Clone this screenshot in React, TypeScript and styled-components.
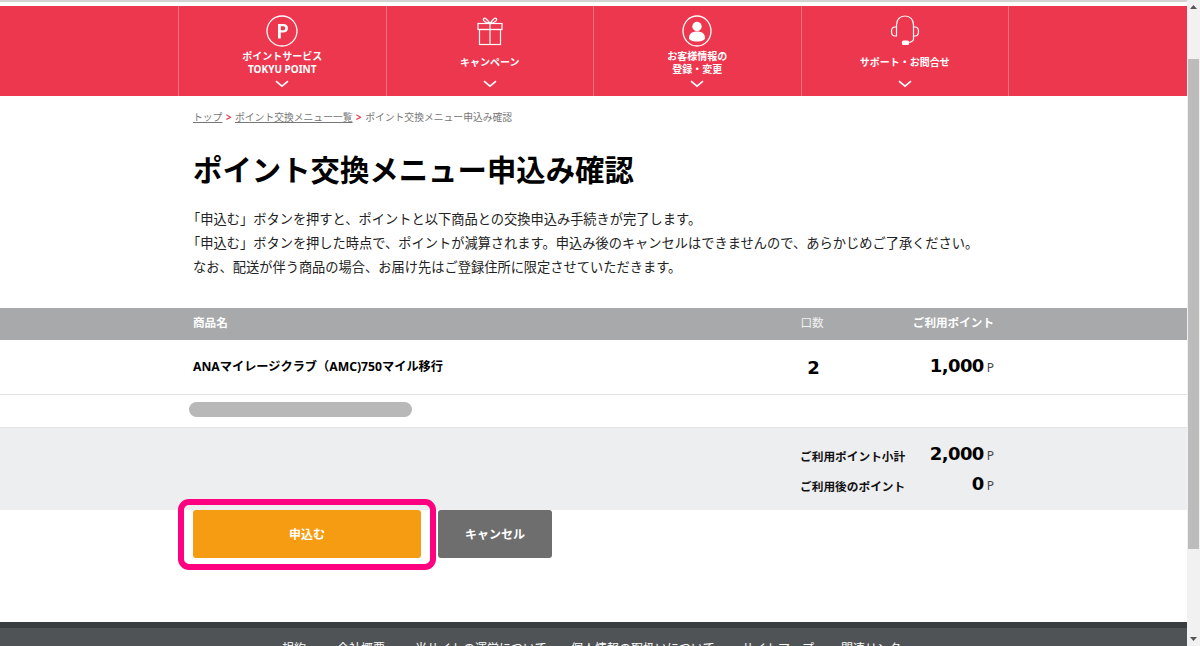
import React from "react";
import styled, { createGlobalStyle } from "styled-components";

const Global = createGlobalStyle`
  html, body { margin: 0; padding: 0; height: 100%; overflow: hidden; background: #fff; }
  body { font-family: "Noto Sans", "Noto Sans CJK JP", sans-serif; color: #000; }
  * { box-sizing: border-box; }
`;

const Page = styled.div`
  display: flex;
  width: 1200px;
  height: 646px;
  overflow: hidden;
`;
const Main = styled.div`
  flex: 1;
  min-width: 0;
  display: flex;
  flex-direction: column;
`;
const TopGap = styled.div`
  height: 6px;
  border-top: 2px solid #d2d2d2;
  flex: none;
`;
const NavBar = styled.nav`
  height: 90px;
  flex: none;
  background: #ec374e;
  display: flex;
  padding-left: 178px;
`;
const NavList = styled.div`
  width: 831px;
  display: grid;
  grid-template-columns: repeat(4, 1fr);
  border-right: 1px solid #f2707f;
`;
const NavItem = styled.div`
  position: relative;
  border-left: 1px solid #f2707f;
  display: flex;
  flex-direction: column;
  align-items: center;
  color: #fff;
  font-size: 10px;
  font-weight: 700;
  line-height: 13px;
  text-align: center;
  padding-top: 8px;
`;
const IconWrap = styled.div`
  height: 34px;
  display: flex;
  align-items: center;
  justify-content: center;
  flex: none;
`;
const NavLabel = styled.div`
  height: 27px;
  margin-top: 1px;
  display: flex;
  flex-direction: column;
  justify-content: center;
  white-space: nowrap;
`;
const Chevron = styled.svg`
  position: absolute;
  left: 50%;
  margin-left: -7px;
  top: 74px;
`;
const Content = styled.div`
  width: 830px;
  margin: 0 auto;
  padding: 0 14.5px;
`;
const Crumbs = styled.div`
  padding-top: 15px;
  height: 40px;
  font-size: 9.8px;
  line-height: 14px;
  color: #777;
  white-space: nowrap;
`;
const CrumbLink = styled.span`
  text-decoration: underline;
`;
const CrumbSep = styled.span`
  color: #ec374e;
  font-weight: 700;
  margin: 0 3.5px;
`;
const Title = styled.h1`
  margin: 14px 0 0;
  font-size: 29.4px;
  line-height: 40px;
  height: 40px;
  font-weight: 700;
  white-space: nowrap;
`;
const Lead = styled.p`
  margin: 17px 0 0 -6px;
  font-size: 13.24px;
  line-height: 24px;
  color: #222;
  white-space: nowrap;
  height: 101px;
`;
const LeadLast = styled.span`
  margin-left: 6px;
`;
const Band = styled.div<{ $bg: string; $h: number; $line?: boolean }>`
  height: ${(p) => p.$h}px;
  background: ${(p) => p.$bg};
  flex: none;
  border-bottom: ${(p) => (p.$line ? "1px solid #e2e3e4" : "none")};
`;
const Row = styled.div`
  width: 830px;
  height: 100%;
  margin: 0 auto;
  padding: 0 14.5px;
  display: grid;
  grid-template-columns: 1fr 80px 142px;
  align-items: center;
`;
const HeadRow = styled(Row)`
  padding-bottom: 4px;
`;
const HeadCell = styled.div<{ $align?: string }>`
  color: #fff;
  font-size: 11.6px;
  font-weight: 700;
  text-align: ${(p) => p.$align || "left"};
  white-space: nowrap;
`;
const QtyHead = styled(HeadCell)`
  font-weight: 400;
  color: #f2f2f2;
`;
const Name = styled.div`
  font-size: 12.2px;
  font-weight: 700;
  white-space: nowrap;
  margin-top: -3px;
`;
const Qty = styled.div`
  font-weight: 700;
  text-align: center;
  font-family: "DejaVu Sans", sans-serif;
  font-size: 18px;
  padding-left: 3px;
`;
const Amount = styled.div`
  text-align: right;
  white-space: nowrap;
  line-height: 28px;
`;
const Num = styled.span`
  font-weight: 700;
  font-family: "DejaVu Sans", sans-serif;
  font-size: 18px;
  letter-spacing: -0.6px;
`;
const Unit = styled.span`
  font-size: 12px;
  color: #444;
  margin-left: 3px;
`;
const Redaction = styled.div`
  width: 830px;
  margin: 0 auto;
  padding: 7px 0 0 10px;
`;
const Pill = styled.div`
  width: 223px;
  height: 15px;
  border-radius: 8px;
  background: #b8b8b8;
`;
const SummaryInner = styled.div`
  width: 830px;
  height: 100%;
  margin: 0 auto;
  padding: 12px 14.5px 0 0;
  display: flex;
  flex-direction: column;
  align-items: flex-end;
`;
const SumRow = styled.div`
  display: flex;
  align-items: center;
  height: 30px;
`;
const SumLabel = styled.div`
  width: 104px;
  font-size: 11.7px;
  font-weight: 700;
  white-space: nowrap;
  color: #111;
  padding-top: 1px;
`;
const SumValue = styled(Amount)`
  width: 90px;
`;
const Actions = styled.div`
  position: relative;
  width: 830px;
  margin: 0 auto;
  padding: 0 0 0 14.5px;
  display: flex;
  gap: 17px;
  height: 112px;
  flex: none;
`;
const Btn = styled.div<{ $bg: string; $w: number }>`
  width: ${(p) => p.$w}px;
  height: 48px;
  background: ${(p) => p.$bg};
  border-radius: 3px;
  color: #fff;
  font-size: 12px;
  font-weight: 700;
  display: flex;
  align-items: center;
  justify-content: center;
`;
const Highlight = styled.div`
  position: absolute;
  left: -1px;
  top: -11px;
  width: 258px;
  height: 71px;
  border: 6px solid #ff0080;
  border-radius: 11px;
`;
const Footer = styled.footer`
  flex: 1;
  background: #505356;
  border-top: 6px solid #3a3d3f;
  color: #fff;
  font-size: 12px;
  line-height: 20px;
  overflow: hidden;
  display: flex;
  padding: 11px 0 0 282px;
  white-space: nowrap;
`;
const FootLink = styled.span<{ $w: number }>`
  width: ${(p) => p.$w}px;
  flex: none;
`;
const Scrollbar = styled.div`
  width: 13px;
  flex: none;
  background: #f1f1f1;
  display: flex;
  flex-direction: column;
  align-items: center;
`;
const Arrow = styled.svg`
  flex: none;
`;
const Track = styled.div`
  flex: 1;
  width: 100%;
  padding: 45px 1px 83px 1px;
  display: flex;
`;
const Thumb = styled.div`
  flex: 1;
  background: #bcbcbc;
`;

const Down = () => (
  <Chevron width="14" height="8" viewBox="0 0 14 8" fill="none" stroke="#fff" strokeWidth="1.6">
    <path d="M1 1.2l6 5 6-5" />
  </Chevron>
);

const PIcon = () => (
  <svg width="32" height="32" viewBox="0 0 32 32" fill="none">
    <circle cx="16" cy="16" r="15" stroke="#fff" strokeWidth="1.3" />
    <path d="M12 23.5V9h5.2c3 0 4.8 1.6 4.8 4.2s-1.9 4.4-4.9 4.4h-2.3v5.9zM14.800 15.300h2.100c1.500 0 2.300-.8 2.300-2.100s-.8-1.900-2.300-1.900h-2.100z" fill="#fff" />
  </svg>
);
const GiftIcon = () => (
  <svg width="26" height="30" viewBox="0 0 26 30" fill="none" stroke="#fff" strokeWidth="1.2">
    <rect x="1" y="7.500" width="24" height="6" />
    <rect x="2.500" y="13.500" width="21" height="15" />
    <path d="M13 7.500v21" />
    <path d="M13 7.500C10 3 8 1.500 6.800 2.500 5.500 3.700 7 6.500 13 7.500zM13 7.500C16 3 18 1.500 19.200 2.500 20.500 3.700 19 6.500 13 7.500z" />
  </svg>
);
const UserIcon = () => (
  <svg width="30" height="32" viewBox="0 0 30 32" fill="none">
    <ellipse cx="15" cy="16" rx="14" ry="15" stroke="#fff" strokeWidth="1.3" />
    <circle cx="15" cy="11.500" r="4.700" fill="#fff" />
    <path d="M7 23c0-4.500 3.300-6.500 8-6.500s8 2 8 6.500c0 2-3.300 3.500-8 3.500S7 25 7 23z" fill="#fff" />
  </svg>
);
const HeadsetIcon = () => (
  <svg width="30" height="32" viewBox="0 0 30 32" fill="none" stroke="#fff" strokeWidth="1.2">
    <path d="M6.500 12V10C6.500 4.500 10 1 15 1s8.500 3.500 8.500 9v2" />
    <path d="M6.500 12H5C2.800 12 1.500 14 1.500 16.500S2.800 21 5 21h1.500zM23.500 12H25c2.200 0 3.500 2 3.500 4.500S27.200 21 25 21h-1.500z" />
    <path d="M23.500 21v3c0 1.500-2 3-5 3.500" />
    <rect x="12.500" y="26" width="6" height="3.500" rx="1" fill="#fff" />
  </svg>
);

const navItems = [
  { icon: <PIcon />, lines: ["ポイントサービス", "TOKYU POINT"] },
  { icon: <GiftIcon />, lines: ["キャンペーン"] },
  { icon: <UserIcon />, lines: ["お客様情報の", "登録・変更"] },
  { icon: <HeadsetIcon />, lines: ["サポート・お問合せ"] },
];

const footerLinks: [string, number][] = [
  ["規約", 55],
  ["会社概要", 78],
  ["当サイトの運営について", 156],
  ["個人情報の取扱いについて", 171],
  ["サイトマップ", 99],
  ["関連リンク", 80],
];

export default function App() {
  return (
    <Page>
      <Global />
      <Main>
        <TopGap />
        <NavBar>
          <NavList>
            {navItems.map((n) => (
              <NavItem key={n.lines[0]}>
                <IconWrap>{n.icon}</IconWrap>
                <NavLabel>
                  {n.lines.map((l) => (
                    <div key={l}>{l}</div>
                  ))}
                </NavLabel>
                <Down />
              </NavItem>
            ))}
          </NavList>
        </NavBar>
        <Content>
          <Crumbs>
            <CrumbLink>トップ</CrumbLink>
            <CrumbSep>&gt;</CrumbSep>
            <CrumbLink>ポイント交換メニュー一覧</CrumbLink>
            <CrumbSep>&gt;</CrumbSep>
            ポイント交換メニュー申込み確認
          </Crumbs>
          <Title>ポイント交換メニュー申込み確認</Title>
          <Lead>
            「申込む」ボタンを押すと、ポイントと以下商品との交換申込み手続きが完了します。
            <br />
            「申込む」ボタンを押した時点で、ポイントが減算されます。申込み後のキャンセルはできませんので、あらかじめご了承ください。
            <br />
            <LeadLast>なお、配送が伴う商品の場合、お届け先はご登録住所に限定させていただきます。</LeadLast>
          </Lead>
        </Content>
        <Band $bg="#a7a9ab" $h={32}>
          <HeadRow>
            <HeadCell>商品名</HeadCell>
            <QtyHead $align="center">口数</QtyHead>
            <HeadCell $align="right">ご利用ポイント</HeadCell>
          </HeadRow>
        </Band>
        <Band $bg="#fff" $h={55} $line>
          <Row>
            <Name>ANAマイレージクラブ（AMC)750マイル移行</Name>
            <Qty>2</Qty>
            <Amount>
              <Num>1,000</Num>
              <Unit>P</Unit>
            </Amount>
          </Row>
        </Band>
        <Band $bg="#fff" $h={33} $line>
          <Redaction>
            <Pill />
          </Redaction>
        </Band>
        <Band $bg="#edeef0" $h={82}>
          <SummaryInner>
            <SumRow>
              <SumLabel>ご利用ポイント小計</SumLabel>
              <SumValue>
                <Num>2,000</Num>
                <Unit>P</Unit>
              </SumValue>
            </SumRow>
            <SumRow>
              <SumLabel>ご利用後のポイント</SumLabel>
              <SumValue>
                <Num>0</Num>
                <Unit>P</Unit>
              </SumValue>
            </SumRow>
          </SummaryInner>
        </Band>
        <Actions>
          <Btn $bg="#f59c12" $w={228}>申込む</Btn>
          <Btn $bg="#6e6e6e" $w={114}>キャンセル</Btn>
          <Highlight />
        </Actions>
        <Footer>
          {footerLinks.map(([t, w]) => (
            <FootLink key={t} $w={w}>{t}</FootLink>
          ))}
        </Footer>
      </Main>
      <Scrollbar>
        <Arrow width="13" height="14" viewBox="0 0 13 14"><path d="M6.500 5l3.500 4H3z" fill="#555" /></Arrow>
        <Track><Thumb /></Track>
        <Arrow width="13" height="14" viewBox="0 0 13 14"><path d="M6.500 9L3 5h7z" fill="#555" /></Arrow>
      </Scrollbar>
    </Page>
  );
}
